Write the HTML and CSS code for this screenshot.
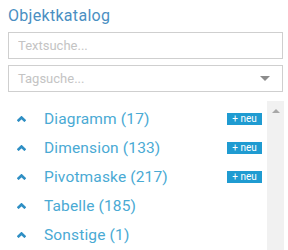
FILE: index.html
```html
<!DOCTYPE html>
<html lang="de">
<head>
  <meta charset="UTF-8" />
  <title>Objektkatalog</title>
  <link rel="stylesheet" href="styles.css">
</head>
<body>
  <div class="catalog">
    <h2 class="catalog-title">Objektkatalog</h2>

    <div class="search">
      <input type="text" class="field" placeholder="Textsuche..." />
      <div class="field select">
        <span class="placeholder">Tagsuche...</span>
        <span class="caret"></span>
      </div>
    </div>

    <div class="list-wrap">
      <ul class="groups">
        <li class="group">
          <svg class="chev" viewBox="0 0 8 5"><path d="M0.6 4.4 L4 1.2 L7.4 4.4" /></svg>
          <span class="group-name">Diagramm (17)</span>
          <span class="badge">+ neu</span>
        </li>
        <li class="group">
          <svg class="chev" viewBox="0 0 8 5"><path d="M0.6 4.4 L4 1.2 L7.4 4.4" /></svg>
          <span class="group-name">Dimension (133)</span>
          <span class="badge">+ neu</span>
        </li>
        <li class="group">
          <svg class="chev" viewBox="0 0 8 5"><path d="M0.6 4.4 L4 1.2 L7.4 4.4" /></svg>
          <span class="group-name">Pivotmaske (217)</span>
          <span class="badge">+ neu</span>
        </li>
        <li class="group">
          <svg class="chev" viewBox="0 0 8 5"><path d="M0.6 4.4 L4 1.2 L7.4 4.4" /></svg>
          <span class="group-name">Tabelle (185)</span>
        </li>
        <li class="group">
          <svg class="chev" viewBox="0 0 8 5"><path d="M0.6 4.4 L4 1.2 L7.4 4.4" /></svg>
          <span class="group-name">Sonstige (1)</span>
        </li>
      </ul>
      <div class="scrollbar">
        <span class="scroll-up"></span>
      </div>
    </div>
  </div>
</body>
</html>
```

FILE: styles.css
```css
* { margin: 0; padding: 0; box-sizing: border-box; }
body {
  font-family: Roboto, "Liberation Sans", sans-serif;
  background: white;
  height: 250px;
  overflow: hidden;
}
.catalog {
  padding: 6px 4px 0 8px;
}
.catalog-title {
  font-size: 16px;
  font-weight: 400;
  letter-spacing: 0.3px;
  line-height: 20px;
  color: #4a8fc2;
  margin-bottom: 6px;
}
.search {
  display: flex;
  flex-direction: column;
  gap: 6px;
  margin-right: 1px;
}
.field {
  height: 27px;
  border: 1px solid #cfcfcf;
  border-radius: 0;
  background: white;
  font-family: inherit;
  font-size: 13px;
  padding: 0 9px;
  outline: none;
  width: 100%;
}
.field::placeholder { color: #c4c4c4; }
.select {
  display: flex;
  align-items: center;
  justify-content: space-between;
  padding-right: 12px;
}
.placeholder { color: #c4c4c4; }
.caret {
  width: 0;
  height: 0;
  border-left: 5px solid transparent;
  border-right: 5px solid transparent;
  border-top: 5px solid #8c8c8c;
}
.list-wrap {
  display: flex;
  margin-top: 9px;
  height: 160px;
}
.groups {
  list-style: none;
  flex: 1;
  padding-top: 3px;
}
.group {
  display: flex;
  align-items: center;
  height: 29px;
  padding-left: 9px;
}
.chev {
  width: 9px;
  height: 6px;
  fill: none;
  stroke: #2f8fc4;
  stroke-width: 2.4;
  margin-right: 18px;
}
.group-name {
  flex: 1;
  font-size: 15.5px;
  letter-spacing: 0.15px;
  color: #4aaad4;
}
.badge {
  background: #1f9bd1;
  color: white;
  font-size: 10px;
  line-height: 12px;
  height: 12px;
  width: 35px;
  text-align: center;
  margin-right: 5px;
}
.scrollbar {
  width: 17px;
  background: #f1f1f1;
  display: flex;
  justify-content: center;
  padding-top: 8px;
}
.scroll-up {
  width: 0;
  height: 0;
  border-left: 4px solid transparent;
  border-right: 4px solid transparent;
  border-bottom: 4px solid #a8a8a8;
}
```
